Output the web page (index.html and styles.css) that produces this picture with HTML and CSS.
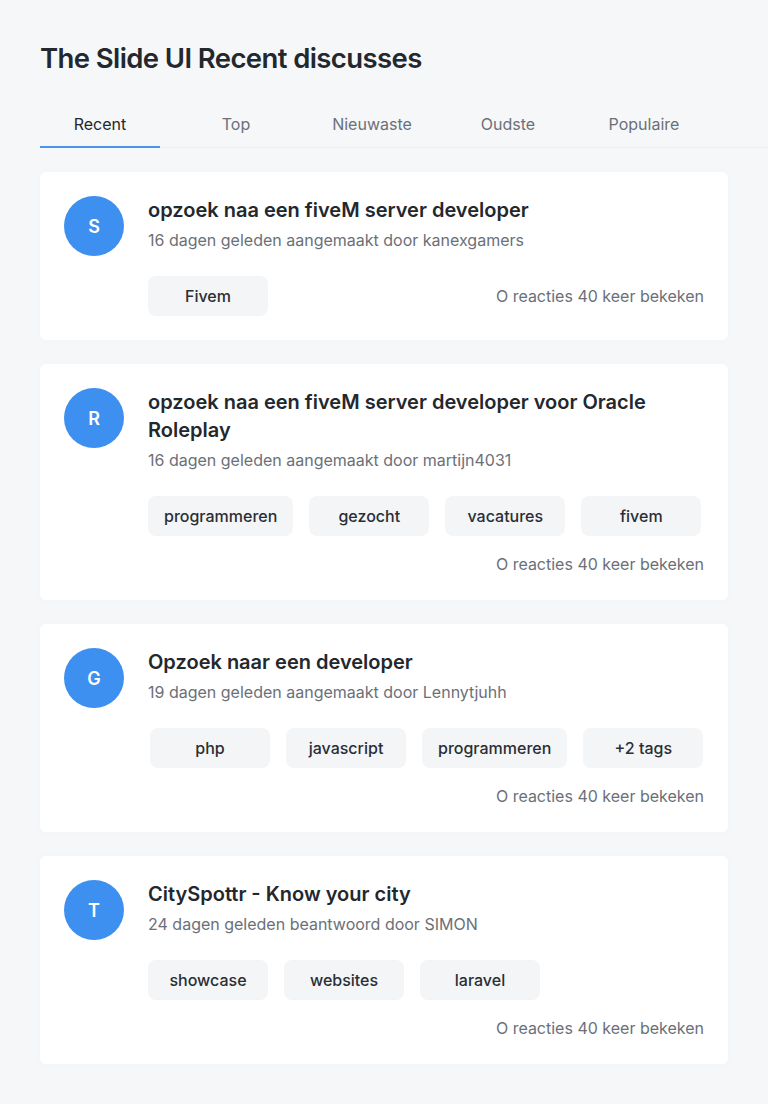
FILE: index.html
```html
<!DOCTYPE html>
<html lang="nl">
<head>
<meta charset="utf-8">
<title>The Slide UI Recent discusses</title>
<link rel="stylesheet" href="styles.css">
</head>
<body>
<main class="page">
  <h1 class="page-title">The Slide UI Recent discusses</h1>
  <nav class="tabs">
    <a class="tab active">Recent</a>
    <a class="tab">Top</a>
    <a class="tab">Nieuwaste</a>
    <a class="tab">Oudste</a>
    <a class="tab">Populaire</a>
  </nav>

  <section class="list">
    <article class="card">
      <div class="avatar">S</div>
      <div class="body">
        <h2 class="title">opzoek naa een fiveM server developer</h2>
        <p class="sub">16 dagen geleden aangemaakt door kanexgamers</p>
        <div class="foot">
          <div class="tags"><span class="tag">Fivem</span></div>
          <span class="meta">O reacties 40 keer bekeken</span>
        </div>
      </div>
    </article>

    <article class="card">
      <div class="avatar">R</div>
      <div class="body">
        <h2 class="title">opzoek naa een fiveM server developer voor Oracle Roleplay</h2>
        <p class="sub">16 dagen geleden aangemaakt door martijn4031</p>
        <div class="foot">
          <div class="tags">
            <span class="tag">programmeren</span>
            <span class="tag">gezocht</span>
            <span class="tag">vacatures</span>
            <span class="tag">fivem</span>
          </div>
          <span class="meta">O reacties 40 keer bekeken</span>
        </div>
      </div>
    </article>

    <article class="card">
      <div class="avatar">G</div>
      <div class="body">
        <h2 class="title">Opzoek naar een developer</h2>
        <p class="sub">19 dagen geleden aangemaakt door Lennytjuhh</p>
        <div class="foot">
          <div class="tags shifted">
            <span class="tag">php</span>
            <span class="tag">javascript</span>
            <span class="tag">programmeren</span>
            <span class="tag">+2 tags</span>
          </div>
          <span class="meta">O reacties 40 keer bekeken</span>
        </div>
      </div>
    </article>

    <article class="card">
      <div class="avatar">T</div>
      <div class="body">
        <h2 class="title">CitySpottr - Know your city</h2>
        <p class="sub">24 dagen geleden beantwoord door SIMON</p>
        <div class="foot">
          <div class="tags">
            <span class="tag">showcase</span>
            <span class="tag">websites</span>
            <span class="tag">laravel</span>
          </div>
          <span class="meta">O reacties 40 keer bekeken</span>
        </div>
      </div>
    </article>
  </section>
</main>
</body>
</html>
```

FILE: styles.css
```css
* { box-sizing: border-box; }

html, body {
  margin: 0;
  padding: 0;
  background: #f6f7f9;
}

body {
  font-family: Inter, "Noto Sans", "Liberation Sans", sans-serif;
  color: #23272e;
}

.page {
  padding: 40px 0 40px 40px;
}

.page-title {
  margin: 0 40px 24px 0;
  font-size: 27.5px;
  line-height: 36px;
  font-weight: 600;
  letter-spacing: -0.6px;
  color: #23272e;
}

.tabs {
  display: flex;
  gap: 16px;
  border-bottom: 1px solid #eceef1;
  margin-bottom: 24px;
}

.tab {
  width: 120px;
  height: 48px;
  padding-top: 2px;
  display: flex;
  align-items: center;
  justify-content: center;
  font-size: 16px;
  color: #6b7078;
  margin-bottom: -1px;
  border-bottom: 2px solid transparent;
}

.tab.active {
  color: #23272e;
  border-bottom-color: #4a94ea;
}

.list {
  display: flex;
  flex-direction: column;
  gap: 24px;
  width: 688px;
}

.card {
  background: #fff;
  border-radius: 6px;
  padding: 24px;
  display: flex;
  gap: 24px;
  box-shadow: 0 0 6px rgba(20, 30, 50, 0.025);
}

.avatar {
  flex: none;
  width: 60px;
  height: 60px;
  border-radius: 50%;
  background: #3d8ff0;
  color: #fff;
  font-size: 18px;
  font-weight: 600;
  display: flex;
  align-items: center;
  justify-content: center;
}

.body {
  flex: 1;
  min-width: 0;
}

.title {
  margin: 0;
  font-size: 20px;
  line-height: 28px;
  font-weight: 600;
  color: #23272e;
}

.sub {
  margin: 4px 0 0;
  font-size: 16px;
  line-height: 24px;
  color: #6b7078;
}

.foot {
  margin-top: 24px;
  display: flex;
  flex-wrap: wrap;
  align-items: center;
  row-gap: 16px;
}

.tags {
  display: flex;
  gap: 16px;
}

.tags.shifted {
  margin-left: 2px;
}

.tag {
  min-width: 120px;
  height: 40px;
  padding: 0 16px;
  border-radius: 8px;
  background: #f4f5f7;
  display: flex;
  align-items: center;
  justify-content: center;
  font-size: 16px;
  font-weight: 500;
  color: #2a2e35;
}

.meta {
  margin-left: auto;
  font-size: 16px;
  line-height: 24px;
  color: #6b7078;
}
```
